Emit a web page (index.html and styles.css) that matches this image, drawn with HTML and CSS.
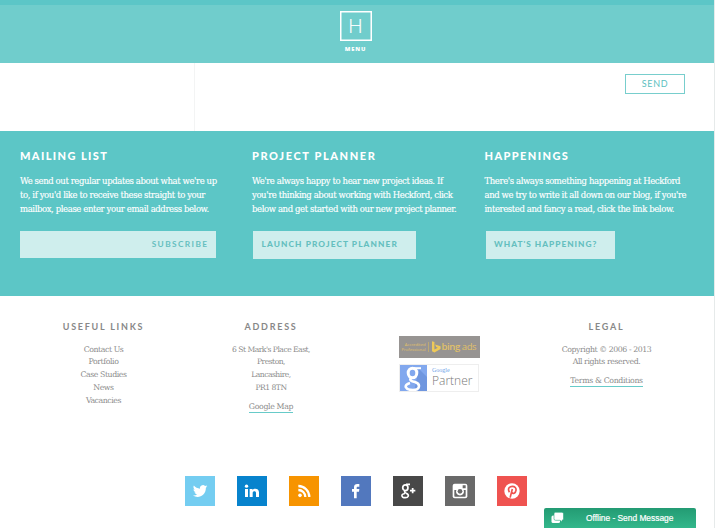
FILE: index.html
```
<!DOCTYPE html>
<html lang="en">
<head>
<meta charset="utf-8">
<title>Heckford</title>
<link rel="stylesheet" href="styles.css">
</head>
<body>
<div class="page">
  <header class="header">
    <a class="logo">H</a>
    <span class="menu">MENU</span>
  </header>
  <section class="form-end"><div class="form-side"></div><button class="send">SEND</button></section>
  <section class="promos">
    <article class="promo">
      <h2>MAILING LIST</h2>
      <p>We send out regular updates about what we're up<br>to, if you'd like to receive these straight to your<br>mailbox, please enter your email address below.</p>
      <div class="subscribe">SUBSCRIBE</div>
    </article>
    <article class="promo">
      <h2 class="wide">PROJECT PLANNER</h2>
      <p>We're always happy to hear new project ideas. If<br>you're thinking about working with Heckford, click<br>below and get started with our new project planner.</p>
      <a class="button planner">LAUNCH PROJECT PLANNER</a>
    </article>
    <article class="promo">
      <h2>HAPPENINGS</h2>
      <p>There's always something happening at Heckford<br>and we try to write it all down on our blog, if you're<br>interested and fancy a read, click the link below.</p>
      <a class="button happening">WHAT'S HAPPENING?</a>
    </article>
  </section>
  <footer class="footer">
    <div class="columns">
      <div class="column"><h3>USEFUL LINKS</h3><p>Contact Us<br>Portfolio<br>Case Studies<br>News<br>Vacancies</p></div>
      <div class="column address"><h3>ADDRESS</h3><p>6 St Mark's Place East,<br>Preston,<br>Lancashire,<br>PR1 8TN</p><a class="link">Google Map</a></div>
      <div class="column badges">
        <div class="bing"><span class="accredited">Accredited<br>Professional</span><svg width="9" height="12" viewBox="0 0 10 13" fill="#efc958"><path d="M0 0l2.7 1v8.3L6.4 7.2 4.6 6.4 3.4 3.6 9.5 5.8v3L2.7 12.7 0 11.2z"/></svg><span class="bing-name"><b>bing</b> ads</span></div>
        <div class="partner"><svg width="27" height="26" viewBox="0 0 27 26"><path fill="#82a8ee" d="M0 0h27v26H0z"/><path fill="#6f96df" d="M19 4l8 8v14H14z"/><g fill="none" stroke="#fff"><ellipse cx="12.500" cy="8" rx="4.300" ry="4.800" stroke-width="3"/><path d="M14 3.200h7" stroke-width="2"/><path d="M12 12.500c-4 2.500 0 3.800 3 4.500 6 2 5 8-2 8-8 0-10-5-3-7" stroke-width="2.600"/></g></svg><span class="partner-name"><small>Google</small><span>Partner</span></span></div>
      </div>
      <div class="column"><h3>LEGAL</h3><p>Copyright © 2006 - 2013<br>All rights reserved.</p><a class="link">Terms &amp; Conditions</a></div>
    </div>
    <nav class="social">
      <a class="twitter"><svg viewBox="0 0 24 24"><path fill="#fff" d="M23 5c-.8.4-1.600.6-2.500.7.9-.5 1.600-1.400 1.900-2.400-.8.5-1.800.9-2.800 1.100a4.500 4.500 0 0 0-7.600 4.100C8.300 8.300 5 6.500 2.800 3.800c-1.200 2-.6 4.700 1.400 6-.7 0-1.400-.2-2-.5 0 2.100 1.500 4 3.600 4.400-.7.2-1.400.2-2 .1.600 1.800 2.200 3.100 4.200 3.100A9 9 0 0 1 1.300 18.800C10 24.300 21 18.500 20.800 7.300 21.700 6.700 22.400 5.900 23 5z"/></svg></a>
      <a class="linkedin"><svg viewBox="0 0 24 24"><path fill="#fff" d="M1.500 9H6v12H1.500zM8.500 9h4.300v1.700c2-3.300 9.700-2.800 9.700 3.300v7H18v-6.300c0-3.500-5-3-5 0V21H8.500z"/><circle cx="3.800" cy="4.800" r="2.500" fill="#fff"/></svg></a>
      <a class="rss"><svg viewBox="0 0 24 24"><circle cx="6" cy="18.500" r="2.700" fill="#fff"/><path d="M3.500 10.500a10.500 10.500 0 0 1 10.500 10.500M3.500 4.500A16.500 16.500 0 0 1 20 21" fill="none" stroke="#fff" stroke-width="3.400"/></svg></a>
      <a class="facebook"><svg viewBox="0 0 24 24"><path fill="#fff" d="M9 23V13H6V9h3V6.500C9 3 11 1.500 14 1.500h3v4h-2c-1.500 0-2 .5-2 2V9h4l-.5 4H13v10z"/></svg></a>
      <a class="gplus"><svg viewBox="0 0 24 24" fill="none" stroke="#fff"><ellipse cx="8" cy="7" rx="3.900" ry="4.300" stroke-width="2.600"/><path d="M9 2h6M8 11.500c-3 2 0 3 2 4.200 4.500 2.600 2.500 6.300-2 6.300-6 0-7.500-5.500-.5-6.300" stroke-width="2.400"/><path d="M19 7.500v8M15 11.500h8" stroke-width="2.600"/></svg></a>
      <a class="instagram"><svg viewBox="0 0 24 24"><rect x="1" y="1" width="22" height="22" rx="3" fill="#fff"/><path fill="#696969" d="M16 3.500h4.500V8H16zM3.500 10.500h3a6 6 0 1 0 11 0h3v9q0 1-1 1h-15q-1 0-1-1z"/><circle cx="12" cy="12.500" r="3.500" fill="#696969"/></svg></a>
      <a class="pinterest"><svg viewBox="0 0 24 24"><circle cx="12" cy="12" r="11.500" fill="#fff"/><path d="M8.200 13.800C4.500 8 9 5 12.500 5c4 0 6 2.600 5.500 6-.6 4.200-4.600 6-6.300 3.300M12.500 9L9.200 22" fill="none" stroke="#ef5350" stroke-width="2.500"/></svg></a>
    </nav>
  </footer>
  <div class="chat"><svg width="13" height="12" viewBox="0 0 13 12"><rect x=".5" y="3.500" width="8.500" height="7.500" rx="1.500" fill="#fff"/><path fill="#fff" stroke="#2aa77d" stroke-width=".6" d="M4.500.3h6.500q1.500 0 1.500 1.500v5q0 1.500-1.500 1.500v1.700L9 8.300H4.500Q3 8.300 3 6.800V1.800Q3 .3 4.500.3z"/></svg><span>Offline - Send Message</span></div>
</div>
</body>
</html>
```
FILE: styles.css
```
* { box-sizing: border-box; }
body { margin: 0; background: #fff; font-family: "DejaVu Serif", serif; overflow: hidden; }
h2, h3, p { margin: 0; }
.page { position: relative; height: 528px; border-right: 1px solid #e6eaea; }
.header { height: 63px; padding: 11px 3px 0 0; background: linear-gradient(#5cc6c7 5px, #70cdcc 5px); display: flex; flex-direction: column; align-items: center; }
.logo { width: 32px; height: 30px; border: 1px solid #fff; box-shadow: inset 0 0 0 .5px #fff; color: #fff; text-align: center; font: 300 19px/28px Lato, sans-serif; -webkit-text-stroke: .2px #fff; }
.menu { margin-top: 4px; font: 800 5.800px/8px "Open Sans", sans-serif; letter-spacing: .9px; color: #fff; }
.form-end { height: 68px; display: flex; justify-content: space-between; padding-right: 29px; }
.form-side { width: 195px; border-right: 1px solid #f3f4f4; }
.send { margin-top: 11px; width: 60px; height: 20px; padding: 0; border: 1px solid #78cecd; background: #fff; color: #5dbfbf; font: 400 9px/18px Lato, sans-serif; letter-spacing: .7px; }
.promos { height: 165px; padding: 18px 0 0 20px; display: grid; grid-template-columns: 232px 232.500px 1fr; background: #5cc6c6; color: #fff; }
.promo { white-space: nowrap; }
.promo h2 { font: 900 11px/14px Lato, sans-serif; letter-spacing: 1.400px; }
.promo h2.wide { letter-spacing: 1.600px; }
.promo p { margin-top: 11px; font-size: 8.500px; line-height: 14.200px; letter-spacing: -.4px; -webkit-text-stroke: .15px #fff; }
.subscribe, .button { display: block; margin-top: 14px; background: #cfeeed; color: #65bfbf; font: 900 8.300px/27px Lato, sans-serif; letter-spacing: 1.100px; }
.subscribe { width: 196px; height: 27px; padding-right: 7.500px; text-align: right; font-weight: 700; letter-spacing: 1.400px; }
.button { height: 28px; margin-left: 1px; padding-left: 8.500px; }
.planner { width: 163px; }
.happening { width: 129px; letter-spacing: 1px; }
.footer { color: #8c8c8c; }
.columns { height: 180px; padding: 24px 24px 0 20px; display: grid; grid-template-columns: 167px 168px 168px 167px; text-align: center; }
.column { display: flex; flex-direction: column; align-items: center; white-space: nowrap; }
.column h3 { font: 700 9px/14px Lato, sans-serif; letter-spacing: 1.750px; color: #888; }
.column p { margin-top: 9.500px; font-size: 7.800px; line-height: 12.800px; letter-spacing: -.43px; }
.address p { font-size: 7.600px; letter-spacing: -.5px; }
.link { margin-top: 6px; font-size: 7.800px; line-height: 11px; letter-spacing: -.35px; border-bottom: 1px solid #67cbc9; }
.badges { padding-top: 16px; }
.bing { width: 81px; height: 22px; background: #979492; color: #e0c069; display: flex; align-items: center; padding-left: 3px; }
.accredited { width: 27px; flex: none; border-right: 1px solid #bca975; font: 4.200px/5px "Open Sans", sans-serif; text-align: right; padding-right: 2px; margin-right: 3px; }
.bing svg { flex: none; }
.bing-name { margin-left: 1px; font: 9.500px/20px "Open Sans", sans-serif; letter-spacing: -.4px; }
.bing-name b { font-weight: 600; }
.partner { margin-top: 6px; width: 80px; height: 28px; border: 1px solid #eee; display: flex; background: #fff; }
.partner-name { padding: 2px 0 0 5px; display: flex; flex-direction: column; gap: 2px; text-align: left; font: 300 12px/12px "Open Sans", sans-serif; color: #777; }
.partner-name small { font: 6px/6px "Liberation Serif", serif; color: #6aa2e8; }
.social { display: flex; gap: 22px; padding-left: 185px; }
.social a { width: 30px; height: 30px; display: flex; align-items: center; justify-content: center; }
.social svg { width: 16px; height: 16px; }
.twitter { background: #74cdf1; }
.linkedin { background: #0783cd; }
.rss { background: #f79400; }
.facebook { background: #5278be; }
.gplus { background: #484848; }
.instagram { background: #696969; }
.pinterest { background: #ef5350; }
.chat { position: absolute; left: 544px; bottom: 0; width: 152px; height: 20px; display: flex; align-items: center; padding-left: 7px; border-radius: 2px 2px 0 0; background: linear-gradient(#239b73, #33b78b); color: #fff; font: 8.400px/18px "Liberation Sans", sans-serif; }
.chat span { margin-left: 22px; -webkit-text-stroke: .2px #fff; }
```
